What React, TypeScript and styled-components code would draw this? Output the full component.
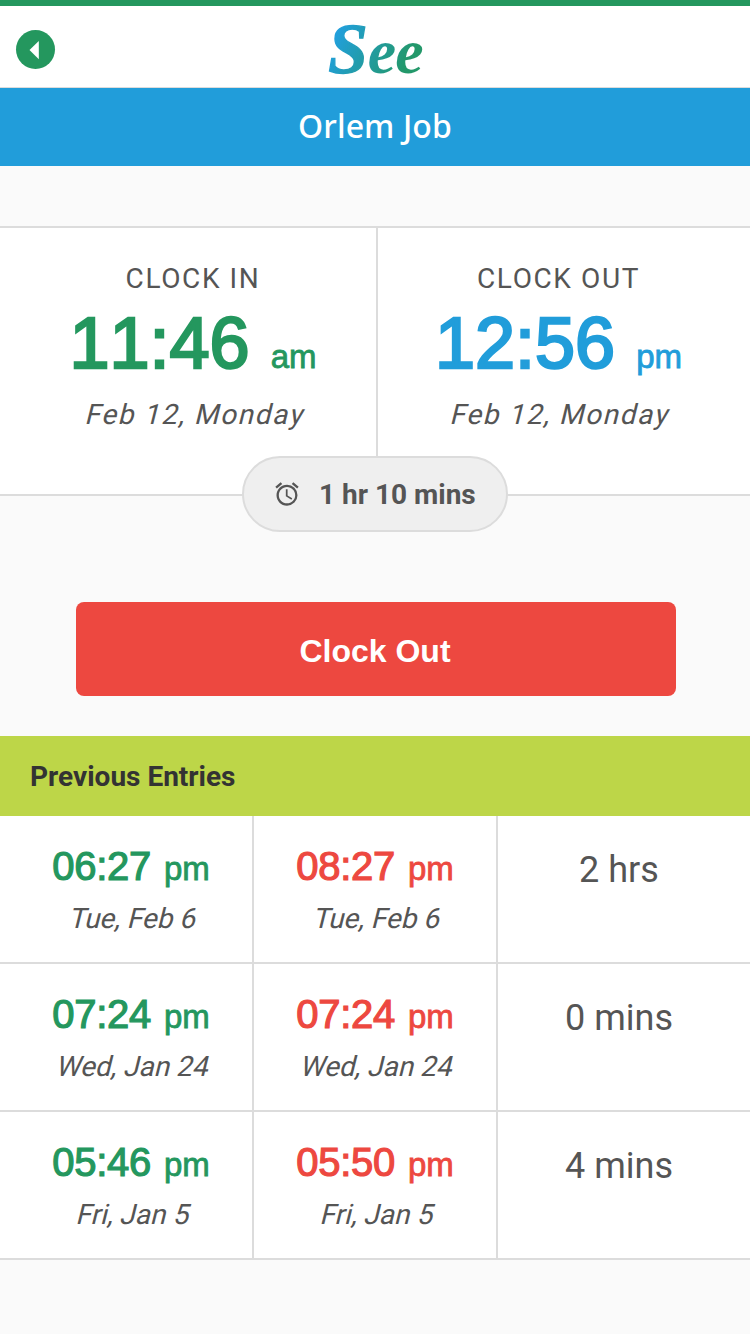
import React from "react";
import styled, { createGlobalStyle } from "styled-components";
import { MdAccessAlarm } from "react-icons/md";

const green = "#24975e";
const blue = "#219dda";
const red = "#ed4840";
const line = "#dcdcdc";
const ink = "#555555";

const GlobalStyle = createGlobalStyle`
  *, *::before, *::after { box-sizing: border-box; }
  body {
    margin: 0;
    background: #fafafa;
    color: ${ink};
    font-family: Roboto, sans-serif;
  }
`;

const Screen = styled.main`
  display: flex;
  flex-direction: column;
  width: 750px;
  height: 1334px;
  background: #fafafa;
  overflow: hidden;
`;

const Header = styled.header`
  display: grid;
  grid-template-columns: 1fr auto 1fr;
  align-items: center;
  height: 88px;
  padding: 0 16px;
  background: #fff;
  border-top: 6px solid ${green};
  border-bottom: 1px solid ${line};
`;

const BackButton = styled.button`
  display: flex;
  width: 39px;
  height: 39px;
  margin-top: 6px;
  padding: 0;
  border: 0;
  border-radius: 50%;
  background: ${green};
`;

const Logo = styled.div`
  display: flex;
  align-items: baseline;
  height: 80px;
  padding: 0 4px 0 5px;
  font: italic bold 71px/84px "Liberation Serif", serif;
  color: transparent;
  -webkit-text-stroke: 1.4px transparent;
  background: linear-gradient(115deg, #219fdc 18%, #23986a 78%);
  background-clip: text;
  -webkit-background-clip: text;
`;

const LogoTail = styled.span`
  font-size: 64px;
  letter-spacing: -1px;
  -webkit-text-stroke-width: 0;
`;

const TitleBar = styled.h1`
  margin: 0;
  height: 78px;
  background: ${blue};
  color: #fff;
  font: 500 32px/75px "Noto Sans", sans-serif;
  letter-spacing: 0.1px;
  text-align: center;
`;

const Summary = styled.section`
  position: relative;
  display: grid;
  grid-template-columns: 378px 1fr;
  height: 270px;
  margin-top: 60px;
  background: #fff;
  border: solid ${line};
  border-width: 2px 0;
`;

const Punch = styled.div<{ $side: "left" | "right" }>`
  display: flex;
  flex-direction: column;
  align-items: center;
  padding-top: 35px;
  ${({ $side }) =>
    $side === "left"
      ? `padding-left: 10px; border-right: 2px solid ${line};`
      : "padding-right: 11px;"}
`;

const Label = styled.div`
  font-size: 28px;
  line-height: 32px;
  letter-spacing: 1.6px;
`;

const Time = styled.div<{ $color: string; $large?: boolean }>`
  display: flex;
  align-items: baseline;
  gap: ${({ $large }) => ($large ? 21 : 13)}px;
  height: ${({ $large }) => ($large ? 80 : 48)}px;
  margin-top: ${({ $large }) => ($large ? 8 : 0)}px;
  color: ${({ $color }) => $color};
  font-family: "Liberation Sans", Arial, sans-serif;
  font-size: ${({ $large }) => ($large ? 72 : 40)}px;
  line-height: ${({ $large }) => ($large ? 80 : 48)}px;
  font-kerning: none;
  letter-spacing: ${({ $large }) => ($large ? 0 : -0.3)}px;
  -webkit-text-stroke: ${({ $large }) => ($large ? 2.5 : 1.2)}px currentColor;
`;

const Meridiem = styled.span`
  font-size: 33px;
  line-height: 1;
  letter-spacing: 0;
  -webkit-text-stroke: 0.8px currentColor;
`;

/* Slanted upright face, pivoting on the text baseline */
const DateText = styled.div<{ $spaced?: boolean }>`
  margin-top: ${({ $spaced }) => ($spaced ? 16 : 13)}px;
  font-size: 28px;
  line-height: 32px;
  letter-spacing: ${({ $spaced }) => ($spaced ? 1.6 : 0)}px;
  transform: skewX(-14deg);
  transform-origin: 50% 26px;
`;

const DurationPill = styled.div`
  position: absolute;
  left: 242px;
  bottom: -38px;
  display: flex;
  align-items: center;
  gap: 18px;
  width: 266px;
  height: 76px;
  padding-left: 29px;
  border: 2px solid ${line};
  border-radius: 38px;
  background: #efefef;
  font-size: 28px;
  font-weight: 700;
  white-space: nowrap;
`;

const ClockOutButton = styled.button`
  width: 600px;
  height: 94px;
  margin: 106px 0 40px 76px;
  padding: 4px 2px 0 0;
  border: 0;
  border-radius: 8px;
  background: ${red};
  color: #fff;
  font: bold 32px "Liberation Sans", Arial, sans-serif;
`;

const SectionTitle = styled.h2`
  margin: 0;
  height: 80px;
  padding-left: 30px;
  background: #bdd648;
  color: #333;
  font-size: 28px;
  font-weight: 700;
  line-height: 82px;
`;

const Row = styled.div`
  display: grid;
  grid-template-columns: 254px 244px 252px;
  height: 148px;
  background: #fff;
  border-bottom: 2px solid ${line};
`;

const Cell = styled.div`
  display: flex;
  flex-direction: column;
  align-items: center;
  padding-top: 26px;
  &:first-child { padding-left: 10px; }
  &:last-child { padding: 32px 10px 0 0; }
  &:not(:last-child) { border-right: 2px solid ${line}; }
`;

const Duration = styled.div`
  font-size: 36px;
  line-height: 44px;
`;

const entries = [
  { start: "06:27", end: "08:27", date: "Tue, Feb 6", total: "2 hrs" },
  { start: "07:24", end: "07:24", date: "Wed, Jan 24", total: "0 mins" },
  { start: "05:46", end: "05:50", date: "Fri, Jan 5", total: "4 mins" },
];

export default function App() {
  return (
    <Screen>
      <GlobalStyle />
      <Header>
        <BackButton aria-label="Back">
          <svg width="39" height="39" viewBox="0 0 39 39" fill="#fff">
            <path d="M13.5 20 22.8 10.9V29.2z" />
          </svg>
        </BackButton>
        <Logo>
          S<LogoTail>ee</LogoTail>
        </Logo>
      </Header>
      <TitleBar>Orlem Job</TitleBar>
      <Summary>
        <Punch $side="left">
          <Label>CLOCK IN</Label>
          <Time $color={green} $large>
            11:46<Meridiem>am</Meridiem>
          </Time>
          <DateText $spaced>Feb 12, Monday</DateText>
        </Punch>
        <Punch $side="right">
          <Label>CLOCK OUT</Label>
          <Time $color={blue} $large>
            12:56<Meridiem>pm</Meridiem>
          </Time>
          <DateText $spaced>Feb 12, Monday</DateText>
        </Punch>
        <DurationPill>
          <MdAccessAlarm size={28} />
          1 hr 10 mins
        </DurationPill>
      </Summary>
      <ClockOutButton>Clock Out</ClockOutButton>
      <SectionTitle>Previous Entries</SectionTitle>
      {entries.map((entry) => (
        <Row key={entry.date}>
          <Cell>
            <Time $color={green}>
              {entry.start}
              <Meridiem>pm</Meridiem>
            </Time>
            <DateText>{entry.date}</DateText>
          </Cell>
          <Cell>
            <Time $color={red}>
              {entry.end}
              <Meridiem>pm</Meridiem>
            </Time>
            <DateText>{entry.date}</DateText>
          </Cell>
          <Cell>
            <Duration>{entry.total}</Duration>
          </Cell>
        </Row>
      ))}
    </Screen>
  );
}
